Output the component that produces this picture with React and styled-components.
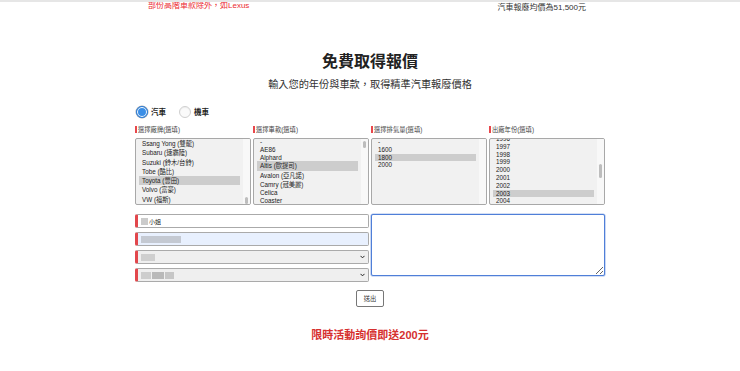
import React from 'react';
import styled, { createGlobalStyle } from 'styled-components';

const Global = createGlobalStyle`
  html, body { margin: 0; padding: 0; background: #fff; }
  body { font-family: "Liberation Sans", "Noto Sans CJK TC", sans-serif; color: #222; }
  * { box-sizing: border-box; }
`;

const Page = styled.div`
  width: 740px;
  min-height: 371px;
  overflow: hidden;
  border-top: 2px solid #e6e6e6;
`;

const TopBar = styled.div`
  display: flex;
  justify-content: space-between;
  align-items: flex-start;
  height: 12px;
  padding: 0 154px 0 148px;
`;

const Notice = styled.span`
  font-size: 8px;
  line-height: 9px;
  color: #ec2a2f;
  margin-top: -1px;
  white-space: nowrap;
`;

const Price = styled.span`
  font-size: 8px;
  line-height: 9px;
  color: #333;
  margin-top: 1px;
  white-space: nowrap;
`;

const Title = styled.h1`
  margin: 38px 0 0;
  text-align: center;
  font-size: 16px;
  line-height: 20px;
  font-weight: 700;
  color: #222;
`;

const Subtitle = styled.p`
  margin: 6px 0 0;
  text-align: center;
  font-size: 10.2px;
  line-height: 14px;
  color: #333;
`;

const Form = styled.div`
  width: 470px;
  margin: 0 auto;
`;

const RadioRow = styled.div`
  display: flex;
  align-items: center;
  gap: 13px;
  margin-top: 13px;
  padding-left: 1px;
  height: 13px;
`;

const RadioOption = styled.label`
  display: flex;
  align-items: center;
  gap: 3px;
  font-size: 7.5px;
  font-weight: 700;
  color: #222;
`;

const RadioDot = styled.span`
  width: 12px;
  height: 12px;
  border-radius: 50%;
  border: 1px solid ${p => (p.$on ? '#2f7fd8' : '#cfcfcf')};
  background: ${p => (p.$on ? '#3a8ee6' : '#fafafa')};
  box-shadow: ${p => (p.$on ? 'inset 0 0 0 1px #fff, 0 0 0 0.5px #aaa' : 'inset 0 1px 1px rgba(0,0,0,0.05)')};
`;

const Columns = styled.div`
  display: grid;
  grid-template-columns: repeat(4, 1fr);
  gap: 2px;
  margin-top: 7px;
`;

const Column = styled.div`
  display: flex;
  flex-direction: column;
`;

const FieldLabel = styled.div`
  display: flex;
  align-items: center;
  gap: 1px;
  height: 8px;
  font-size: 6.3px;
  color: #444;
  margin-bottom: 5px;
  &::before {
    content: "";
    width: 2px;
    height: 7px;
    background: #e8474c;
  }
`;

const List = styled.div`
  position: relative;
  height: 67px;
  border: 1px solid #a8a8a8;
  border-radius: 2px;
  background: #f1f1f1;
  overflow: hidden;
  padding: 0 10px 0 3px;
`;

const ListInner = styled.div`
  margin-top: ${p => p.$offset}px;
`;

const Item = styled.div`
  font-size: 6.3px;
  height: ${p => (p.$tall ? 9.3 : 7.8)}px;
  line-height: ${p => (p.$tall ? 9.3 : 7.8)}px;
  padding: 0 3px;
  white-space: nowrap;
  color: #222;
  background: ${p => (p.$selected ? '#cdcdcd' : 'transparent')};
`;

const Track = styled.div`
  position: absolute;
  top: 0;
  right: 0;
  bottom: 0;
  width: 7px;
  background: #f8f8f8;
`;

const Thumb = styled.div`
  position: absolute;
  right: 2px;
  width: 3px;
  border-radius: 2px;
  background: #bdbdbd;
`;

const InputArea = styled.div`
  display: grid;
  grid-template-columns: 1fr 1fr;
  gap: 2px;
  margin-top: 9px;
`;

const InputStack = styled.div`
  display: flex;
  flex-direction: column;
  gap: 4px;
`;

const Field = styled.div`
  position: relative;
  display: flex;
  align-items: center;
  gap: 1px;
  height: 14px;
  border: 1px solid #aaa;
  border-left: 3px solid #e2474c;
  border-radius: 2px;
  padding: 0 3px;
  background: ${p => p.$bg || '#fff'};
  font-size: 6px;
  color: #222;
`;

const Redacted = styled.span`
  display: inline-block;
  width: ${p => p.$w}px;
  height: 7px;
  background: ${p => p.$c || '#cbcbcb'};
  filter: blur(0.7px);
`;

const Chevron = styled.svg`
  position: absolute;
  right: 3px;
  top: 50%;
  margin-top: -2px;
  width: 5px;
  height: 4px;
`;

const Note = styled.textarea`
  height: 62px;
  width: 100%;
  border: 1px solid #4f7fd8;
  border-radius: 2px;
  box-shadow: 0 0 0 0.6px #a9c0ec;
  outline: none;
  background: #fff;
  margin: 0;
  font-family: inherit;
`;

const Submit = styled.button`
  display: block;
  margin: 8px auto 0;
  width: 28px;
  height: 17px;
  padding: 0;
  border: 1px solid #777;
  border-radius: 2px;
  background: #fff;
  font-family: inherit;
  font-size: 6.3px;
  color: #333;
`;

const Promo = styled.p`
  margin: 21px 0 0;
  text-align: center;
  font-size: 11px;
  line-height: 14px;
  font-weight: 700;
  color: #d6302f;
`;

const lists = [
  {
    label: '選擇廠牌(選填)',
    offset: 0,
    thumb: { top: 58, height: 7 },
    items: ['Ssang Yong (雙龍)', 'Subaru (速霸陸)', 'Suzuki (鈴木/台鈴)', 'Tobe (酷比)', 'Toyota (豐田)', 'Volvo (富豪)', 'VW (福斯)'],
    selected: 'Toyota (豐田)',
  },
  {
    label: '選擇車款(選填)',
    offset: -1,
    thumb: { top: 2, height: 7 },
    items: ['-', 'AE86', 'Alphard', 'Altis (歐提司)', 'Avalon (亞凡諾)', 'Camry (冠美麗)', 'Celica', 'Coaster'],
    selected: 'Altis (歐提司)',
  },
  {
    label: '選擇排氣量(選填)',
    offset: -1,
    thumb: null,
    items: ['-', '1600', '1800', '2000'],
    selected: '1800',
  },
  {
    label: '出廠年份(選填)',
    offset: -4,
    thumb: { top: 25, height: 14 },
    items: ['1996', '1997', '1998', '1999', '2000', '2001', '2002', '2003', '2004'],
    selected: '2003',
  },
];

const hasCJK = s => /[^\x00-\x7f]/.test(s);

function ChevronIcon() {
  return (
    <Chevron viewBox="0 0 10 7">
      <path d="M1 1.2 L5 5.2 L9 1.2" fill="none" stroke="#222" strokeWidth="2" />
    </Chevron>
  );
}

export default function App() {
  return (
    <Page>
      <Global />
      <TopBar>
        <Notice>部份高階車款除外，如Lexus</Notice>
        <Price>汽車報廢均價為51,500元</Price>
      </TopBar>
      <Title>免費取得報價</Title>
      <Subtitle>輸入您的年份與車款，取得精準汽車報廢價格</Subtitle>
      <Form>
        <RadioRow>
          <RadioOption><RadioDot $on />汽車</RadioOption>
          <RadioOption><RadioDot />機車</RadioOption>
        </RadioRow>
        <Columns>
          {lists.map(l => (
            <Column key={l.label}>
              <FieldLabel>{l.label}</FieldLabel>
              <List>
                <ListInner $offset={l.offset}>
                  {l.items.map(it => (
                    <Item key={it} $tall={hasCJK(it)} $selected={it === l.selected}>{it}</Item>
                  ))}
                </ListInner>
                <Track />
                {l.thumb && <Thumb style={{ top: l.thumb.top, height: l.thumb.height }} />}
              </List>
            </Column>
          ))}
        </Columns>
        <InputArea>
          <InputStack>
            <Field><Redacted $w={7} />小姐</Field>
            <Field $bg="#e8f0fe"><Redacted $w={40} $c="#c4c9d2" /></Field>
            <Field $bg="#efefef"><Redacted $w={14} $c="#cfcfcf" /><ChevronIcon /></Field>
            <Field $bg="#efefef">
              <Redacted $w={10} $c="#cdcdcd" />
              <Redacted $w={12} $c="#b9b9b9" />
              <Redacted $w={9} $c="#c6c6c6" />
              <ChevronIcon />
            </Field>
          </InputStack>
          <Note />
        </InputArea>
        <Submit>送出</Submit>
        <Promo>限時活動詢價即送200元</Promo>
      </Form>
    </Page>
  );
}
